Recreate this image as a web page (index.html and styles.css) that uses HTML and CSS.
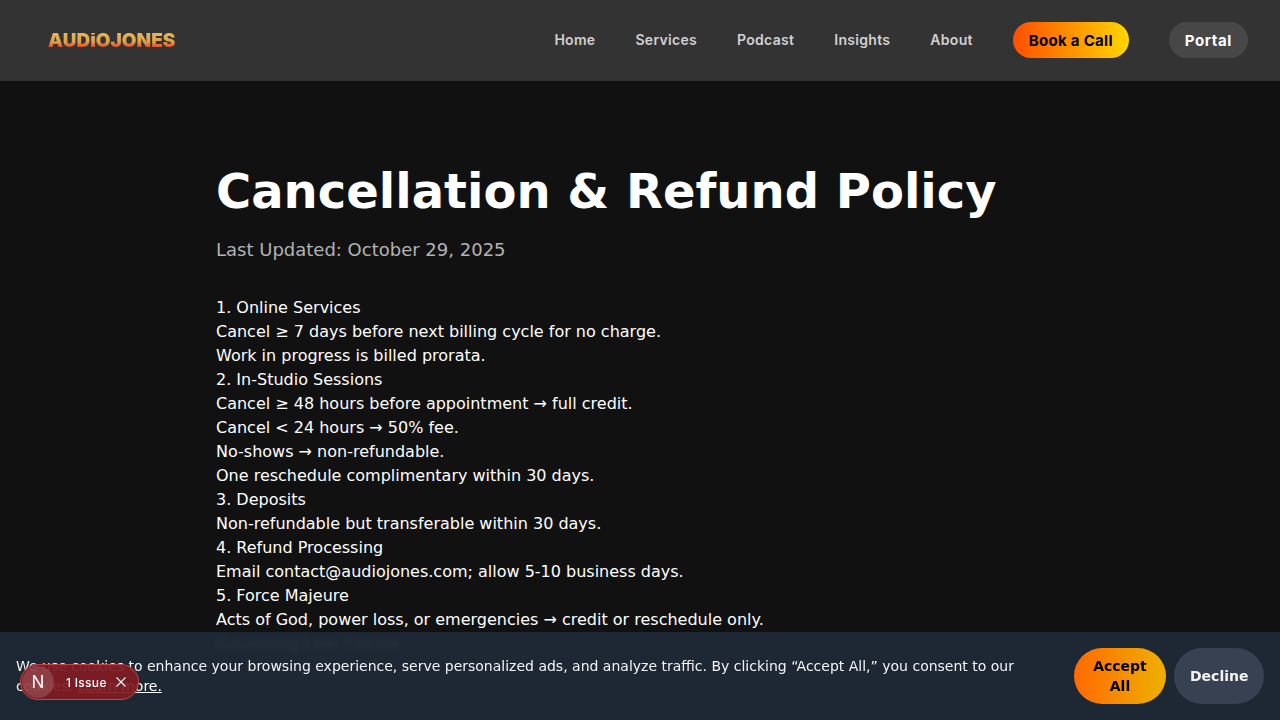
FILE: index.html
```html
<!DOCTYPE html>
<html lang="en">

<head>
    <meta charset="UTF-8" />
    <meta name="viewport" content="width=device-width, initial-scale=1.0" />
    <title>Cancellation &amp; Refund Policy | Audio Jones</title>
    <link rel="stylesheet" href="styles.css">
</head>

<body>

    <header class="site-header">
        <a class="logo" href="#">AUDiOJONES</a>
        <nav class="main-nav">
            <a href="#">Home</a>
            <a href="#">Services</a>
            <a href="#">Podcast</a>
            <a href="#">Insights</a>
            <a href="#">About</a>
            <a class="book-btn" href="#">Book a Call</a>
            <a class="portal-btn" href="#">Portal</a>
        </nav>
    </header>

    <main class="policy">
        <h1>Cancellation &amp; Refund Policy</h1>
        <p class="updated">Last Updated: October 29, 2025</p>
        <div class="policy-body">
            <p>1. Online Services</p>
            <p>Cancel ≥ 7 days before next billing cycle for no charge.</p>
            <p>Work in progress is billed prorata.</p>
            <p>2. In-Studio Sessions</p>
            <p>Cancel ≥ 48 hours before appointment → full credit.</p>
            <p>Cancel &lt; 24 hours → 50% fee.</p>
            <p>No-shows → non-refundable.</p>
            <p>One reschedule complimentary within 30 days.</p>
            <p>3. Deposits</p>
            <p>Non-refundable but transferable within 30 days.</p>
            <p>4. Refund Processing</p>
            <p>Email contact@audiojones.com; allow 5-10 business days.</p>
            <p>5. Force Majeure</p>
            <p>Acts of God, power loss, or emergencies → credit or reschedule only.</p>
            <p>Governing Law: Florida</p>
        </div>
    </main>

    <div class="cookie-banner">
        <p class="cookie-text">We use cookies to enhance your browsing experience, serve personalized ads, and analyze traffic. By clicking “Accept All,” you consent to our cookies. <a href="#">Learn more.</a></p>
        <div class="cookie-actions">
            <button class="accept-btn" type="button">Accept All</button>
            <button class="decline-btn" type="button">Decline</button>
        </div>
    </div>

    <div class="dev-badge">
        <span class="dev-logo">N</span>
        <span class="dev-count">1 Issue</span>
        <svg class="dev-close" width="10" height="10" viewBox="0 0 10 10" fill="none" stroke="#fff" stroke-width="1.1">
            <path d="M0.5 0.5 L9.5 9.5 M9.5 0.5 L0.5 9.5" />
        </svg>
    </div>

</body>

</html>
```

FILE: styles.css
```css
* {
    box-sizing: border-box;
}

html,
body {
    height: 100%;
}

body {
    margin: 0;
    height: 720px;
    overflow: hidden;
    background-color: #111111;
    color: #ffffff;
    font-family: 'DejaVu Sans', sans-serif;
}

a {
    color: inherit;
    text-decoration: none;
}

.site-header {
    height: 81px;
    background-color: #333333;
    display: flex;
    align-items: center;
    justify-content: space-between;
    padding: 0 32px 1px 48px;
}

.logo {
    margin-top: 2px;
    font-family: 'Inter', sans-serif;
    font-weight: 900;
    font-size: 19px;
    line-height: 16px;
    letter-spacing: 0;
    background: linear-gradient(180deg, #e9b45a 0%, #dca24a 55%, #e8703a 72%, #e04c2a 90%);
    -webkit-background-clip: text;
    background-clip: text;
    color: transparent;
}

.main-nav {
    display: flex;
    align-items: center;
    gap: 40px;
    font-family: 'Inter', sans-serif;
    font-size: 14px;
    line-height: 20px;
    font-weight: 600;
    letter-spacing: 0.3px;
    color: #d1d1d1;
}

.book-btn,
.portal-btn {
    height: 36px;
    display: flex;
    align-items: center;
    padding: 2px 16px 0;
    border-radius: 18px;
    font-size: 15px;
    font-weight: 700;
}

.book-btn {
    background: linear-gradient(90deg, #ff4e00, #ffd700);
    color: #000000;
    letter-spacing: 0.3px;
}

.portal-btn {
    background-color: #474747;
    color: #ffffff;
    letter-spacing: 0.6px;
}

.policy {
    max-width: 848px;
    margin: 0 auto;
    padding: 80px 0 0;
}

.policy h1 {
    margin: 0;
    font-size: 48px;
    line-height: 60px;
    font-weight: 700;
}

.updated {
    margin: 15px 0 0;
    font-size: 18px;
    line-height: 28px;
    color: #b3b3b3;
}

.policy-body {
    margin-top: 32px;
    font-size: 16px;
    line-height: 24px;
    color: #ffffff;
}

.policy-body p {
    margin: 0;
}

.cookie-banner {
    position: fixed;
    left: 0;
    right: 0;
    bottom: 0;
    height: 88px;
    display: flex;
    align-items: center;
    gap: 16px;
    padding: 0 16px;
    background-color: rgba(31, 41, 55, 0.97);
    backdrop-filter: blur(2px);
}

.cookie-text {
    flex: 1;
    margin: 0;
    font-size: 14px;
    line-height: 20px;
    color: #f3f4f6;
}

.cookie-text a {
    color: #ffffff;
    text-decoration: underline;
}

.cookie-actions {
    display: flex;
    gap: 8px;
}

.accept-btn,
.decline-btn {
    height: 56px;
    padding: 0 16px;
    border: none;
    border-radius: 28px;
    font-family: inherit;
    font-size: 14px;
    line-height: 20px;
    font-weight: 700;
}

.accept-btn {
    width: 92px;
    background: linear-gradient(90deg, #ff6a00, #eeb000);
    color: #000000;
}

.decline-btn {
    width: 90px;
    background-color: #374151;
    color: #f3f4f6;
}

.dev-badge {
    position: fixed;
    left: 20px;
    bottom: 20px;
    width: 119px;
    height: 36px;
    display: flex;
    align-items: center;
    padding: 0 0 0 1px;
    border: 1px solid #c2474b;
    border-radius: 18px;
    background-color: rgba(128, 28, 34, 0.93);
    font-family: 'Inter', sans-serif;
    color: #ffffff;
}

.dev-logo {
    width: 32px;
    height: 32px;
    border-radius: 50%;
    background-color: rgba(255, 255, 255, 0.15);
    display: flex;
    align-items: center;
    justify-content: center;
    font-size: 17px;
    font-weight: 400;
}

.dev-count {
    margin-left: 12px;
    font-size: 12px;
    font-weight: 500;
    letter-spacing: 0.3px;
}

.dev-close {
    margin-left: 9px;
}
```
